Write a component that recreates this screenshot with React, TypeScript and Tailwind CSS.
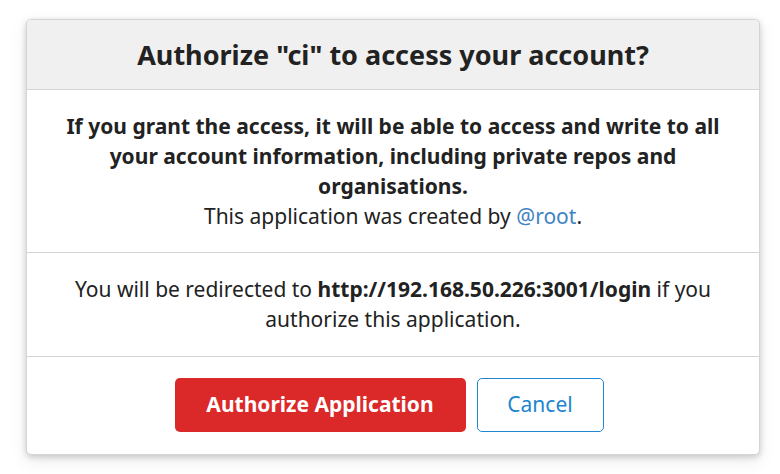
import React from 'react';

export default function App() {
  return (
    <div className="min-h-[474px] bg-white pt-[19px] pl-[26px] font-['Noto_Sans',sans-serif] text-[#222]">
      <div className="w-[734px] rounded-[5px] border border-[#d4d4d5] bg-white shadow-[0_2px_6px_rgba(0,0,0,0.18),0_6px_18px_rgba(0,0,0,0.08)]">
        <div className="flex h-[70px] items-center justify-center rounded-t-[5px] border-b border-[#d4d4d5] bg-[#f0f0f0]">
          <h3 className="text-[27px] font-bold leading-none">Authorize "ci" to access your account?</h3>
        </div>

        <div className="border-b border-[#d4d4d5] px-[21px] py-[21px] text-center text-[21px] leading-[30px]">
          <p className="font-bold">
            If you grant the access, it will be able to access and write to all your account information, including private repos and organisations.
          </p>
          <p>
            This application was created by <a className="text-[#4183c4]">@root</a>.
          </p>
        </div>

        <div className="border-b border-[#d4d4d5] px-[21px] pt-[21px] pb-[22px] text-center text-[21px] leading-[30px]">
          <p>
            You will be redirected to <b>http://192.168.50.226:3001/login</b> if you authorize this application.
          </p>
        </div>

        <div className="flex items-center justify-center gap-[11px] pt-[21px] pb-[22px] pr-[8px]">
          <button className="h-[54px] w-[291px] rounded-[5px] bg-[#db2828] text-[21px] font-bold text-white">
            Authorize Application
          </button>
          <button className="h-[54px] w-[127px] rounded-[5px] border border-[#2185d0] bg-white text-[21px] text-[#2185d0]">
            Cancel
          </button>
        </div>
      </div>
    </div>
  );
}
